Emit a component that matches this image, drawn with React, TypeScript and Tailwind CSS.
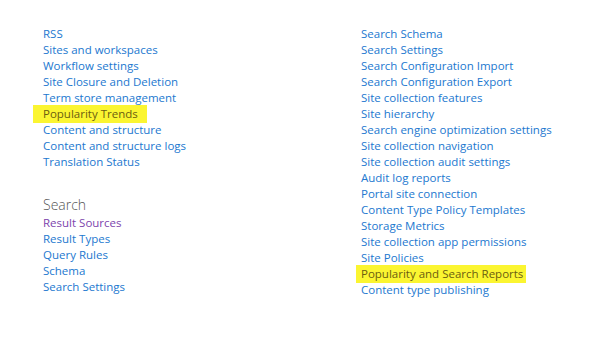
const leftLinks = [
  "RSS",
  "Sites and workspaces",
  "Workflow settings",
  "Site Closure and Deletion",
  "Term store management",
  "Popularity Trends",
  "Content and structure",
  "Content and structure logs",
  "Translation Status",
];

const searchLinks = ["Result Sources", "Result Types", "Query Rules", "Schema", "Search Settings"];

const rightLinks = [
  "Search Schema",
  "Search Settings",
  "Search Configuration Import",
  "Search Configuration Export",
  "Site collection features",
  "Site hierarchy",
  "Search engine optimization settings",
  "Site collection navigation",
  "Site collection audit settings",
  "Audit log reports",
  "Portal site connection",
  "Content Type Policy Templates",
  "Storage Metrics",
  "Site collection app permissions",
  "Site Policies",
  "Popularity and Search Reports",
  "Content type publishing",
];

const Link = ({ text, marked, visited, wide }: { text: string; marked?: boolean; visited?: boolean; wide?: boolean }) => {
  if (marked) {
    return (
      <div className="h-4 leading-4">
        <span
          className={`inline-block h-[18px] leading-[18px] -mt-px bg-[#fbf531] text-[#6b5d10] ${
            wide ? "-ml-[10px] pl-[10px] pr-[9px]" : "-ml-[5px] pl-[5px] pr-[3px]"
          }`}
        >
          {text}
        </span>
      </div>
    );
  }
  return <div className={`h-4 leading-4 ${visited ? "text-[#7d44ad]" : "text-[#2278cf]"}`}>{text}</div>;
};

export default function App() {
  return (
    <div className="w-[603px] h-[338px] bg-white text-[11.5px] font-['Segoe_UI','Open_Sans',sans-serif] flex pt-[26px]">
      <div className="w-[361px] pl-[43px] shrink-0">
        {leftLinks.map((t) => (
          <Link key={t} text={t} marked={t === "Popularity Trends"} wide />
        ))}
        <div className="mt-[25px] text-[14px] leading-5 text-[#555] font-light">Search</div>
        {searchLinks.map((t) => (
          <Link key={t} text={t} visited={t === "Result Sources"} />
        ))}
      </div>
      <div>
        {rightLinks.map((t) => (
          <Link key={t} text={t} marked={t === "Popularity and Search Reports"} />
        ))}
      </div>
    </div>
  );
}
